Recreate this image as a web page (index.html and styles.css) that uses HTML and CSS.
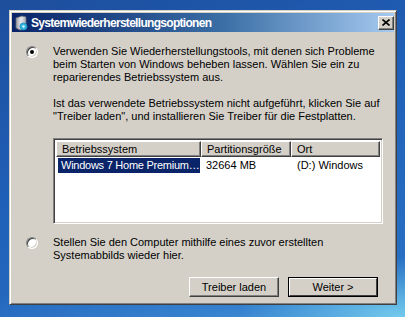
FILE: index.html
```html
<!DOCTYPE html>
<html lang="de">
<head>
<meta charset="utf-8">
<link rel="stylesheet" href="styles.css">
</head>
<body>
<div class="desktop">
  <div class="window">
    <div class="titlebar">
      <svg class="ticon" width="14" height="16" viewBox="0 0 14 16">
        <defs>
          <linearGradient id="dg" x1="0" x2="1" y1="0" y2="0">
            <stop offset="0" stop-color="#9a9ea6"/>
            <stop offset="0.5" stop-color="#e6e8ec"/>
            <stop offset="1" stop-color="#a8acb4"/>
          </linearGradient>
        </defs>
        <path d="M2 3 L8 1 L12 2 L12 14 L6 15 L2 13 Z" fill="url(#dg)" stroke="#6b6f78" stroke-width="0.8"/>
        <circle cx="9.5" cy="11.5" r="3.6" fill="#2fb4e0" stroke="#1a7fb0" stroke-width="0.6"/>
        <circle cx="9.5" cy="11.5" r="1.2" fill="#d8f4ff"/>
      </svg>
      <span class="ttext">Systemwiederherstellungsoptionen</span>
      <span class="close">
        <svg width="8" height="7" viewBox="0 0 8 7"><path d="M0.5 0.5 L7.5 6.5 M7.5 0.5 L0.5 6.5" stroke="#000" stroke-width="1.6"/></svg>
      </span>
    </div>
    <div class="body">
      <div class="option">
        <span class="radio checked"></span>
        <div class="otext">
          <p>Verwenden Sie Wiederherstellungstools, mit denen sich Probleme<br>beim Starten von Windows beheben lassen. Wählen Sie ein zu<br>reparierendes Betriebssystem aus.</p>
          <p class="p2">Ist das verwendete Betriebssystem nicht aufgeführt, klicken Sie auf<br>"Treiber laden", und installieren Sie Treiber für die Festplatten.</p>
          <div class="list">
            <div class="lhead">
              <span class="hc c1">Betriebssystem</span>
              <span class="hc c2">Partitionsgröße</span>
              <span class="hc c3">Ort</span>
            </div>
            <div class="lrow">
              <span class="rc c1"><span class="sel">Windows 7 Home Premium…</span></span>
              <span class="rc c2">32664 MB</span>
              <span class="rc c3">(D:) Windows</span>
            </div>
          </div>
        </div>
      </div>
      <div class="option opt2">
        <span class="radio"></span>
        <div class="otext">
          <p>Stellen Sie den Computer mithilfe eines zuvor erstellten<br>Systemabbilds wieder hier.</p>
        </div>
      </div>
      <div class="buttons">
        <span class="btn">Treiber laden</span>
        <span class="btn default"><span class="bin">Weiter &gt;</span></span>
      </div>
    </div>
  </div>
</div>
</body>
</html>
```
FILE: styles.css
```css
html, body { margin: 0; padding: 0; }
body {
  width: 405px; height: 317px; overflow: hidden;
  font-family: "Liberation Sans", Arial, sans-serif;
  font-size: 11px;
}
.desktop {
  width: 405px; height: 317px; box-sizing: border-box;
  padding: 10px 0 0 9px;
  background:
    radial-gradient(ellipse 160px 60px at 400px 317px, rgba(120,210,240,0.9), rgba(120,210,240,0) 100%),
    radial-gradient(ellipse 300px 40px at 250px 317px, rgba(70,150,220,0.6), rgba(70,150,220,0) 100%),
    linear-gradient(160deg, #1d4e9c 0%, #2060b8 45%, #2a74c6 100%);
}
.window {
  width: 388px; height: 295px; box-sizing: border-box;
  background: #d4d0c8;
  border: 1px solid; border-color: #d4d0c8 #404040 #404040 #d4d0c8;
  box-shadow: inset 1px 1px #fff, inset -1px -1px #808080;
  padding: 2px;
  display: flex; flex-direction: column;
}
.titlebar {
  height: 19px; flex: none;
  background: linear-gradient(90deg, #0a246a 0%, #3a6ea5 55%, #a6caf0 100%);
  display: flex; align-items: center;
  padding: 0 0 0 2px;
}
.ticon { flex: none; margin-right: 3px; margin-top: 1px; }
.ttext {
  color: #fff; font-weight: bold; font-size: 12px;
  font-family: "Liberation Sans", Arial, sans-serif; letter-spacing: -0.7px;
  flex: 1;
}
.close {
  width: 16px; height: 14px; box-sizing: border-box;
  background: #d4d0c8;
  border: 1px solid; border-color: #fff #404040 #404040 #fff;
  box-shadow: inset -1px -1px #808080;
  display: flex; align-items: center; justify-content: center;
  padding: 0 1px 1px 0;
}
.close svg { display: block; }
.body {
  flex: 1; padding: 13px 0 0 14px;
  display: flex; flex-direction: column;
}
.option { display: flex; gap: 15px; }
.radio {
  width: 12px; height: 12px; flex: none; box-sizing: border-box;
  border-radius: 50%;
  background: #fff;
  border: 1px solid; border-color: #808080 #fff #fff #808080;
  box-shadow: inset 1px 1px #404040, inset -1px -1px #d4d0c8;
  margin-top: 1px;
  position: relative;
}
.radio.checked::after {
  content: ""; position: absolute; left: 3px; top: 3px;
  width: 4px; height: 4px; border-radius: 50%; background: #000;
}
.otext { width: 330px; color: #000; }
.otext p { margin: 0; line-height: 13px; }
.p2 { margin-top: 13px !important; }
.list {
  margin-top: 15px;
  height: 86px; box-sizing: border-box;
  background: #fff;
  border: 1px solid; border-color: #808080 #fff #fff #808080;
  box-shadow: inset 1px 1px #404040, inset -1px -1px #d4d0c8;
  padding: 2px 2px 0 2px;
}
.lhead { display: flex; height: 16px; }
.hc {
  box-sizing: border-box; height: 16px;
  background: #d4d0c8;
  border: 1px solid; border-color: #fff #404040 #404040 #fff;
  box-shadow: inset -1px -1px #808080;
  padding: 0 0 0 5px; line-height: 14px;
  white-space: nowrap; overflow: hidden;
}
.c1 { width: 145px; }
.c2 { width: 90px; }
.c3 { width: 90px; flex: 1; }
.lrow { display: flex; height: 16px; margin-top: 1px; }
.rc { box-sizing: border-box; line-height: 15px; padding-left: 6px; white-space: nowrap; }
.lrow .c1 { padding-left: 2px; }
.sel {
  display: block; background: #0a246a; color: #fff; padding-left: 3px;
  height: 15px; width: 142px; box-sizing: border-box;
  letter-spacing: -0.25px; overflow: hidden;
}
.lrow .c2 { padding-left: 5px; }
.lrow .c3 { padding-left: 6px; }
.opt2 { margin-top: 12px; }
.buttons {
  display: flex; justify-content: flex-end; gap: 9px;
  padding-right: 16px; margin-top: 15px;
}
.btn {
  width: 90px; height: 20px; box-sizing: border-box;
  background: #d4d0c8;
  border: 1px solid; border-color: #fff #404040 #404040 #fff;
  box-shadow: inset -1px -1px #808080;
  display: flex; align-items: center; justify-content: center;
  font-size: 11px;
}
.btn.default {
  border: 1px solid #000; box-shadow: none; padding: 0;
}
.bin {
  width: 100%; height: 100%; box-sizing: border-box;
  border: 1px solid; border-color: #fff #404040 #404040 #fff;
  display: flex; align-items: center; justify-content: center;
}
```
